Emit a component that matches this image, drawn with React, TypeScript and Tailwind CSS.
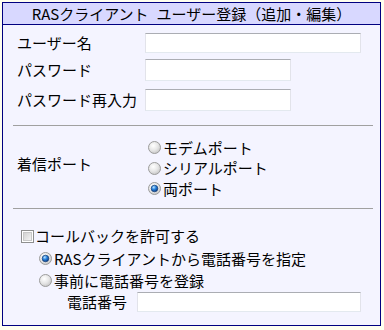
import React from "react";

const FONT = { fontFamily: '"Noto Sans CJK JP", "Noto Sans", sans-serif' };

const Radio = ({ checked }: { checked?: boolean }) => (
  <svg width="13" height="13" viewBox="0 0 13 13" className="shrink-0 block">
    <defs>
      <radialGradient id="rgOff" cx="40%" cy="35%" r="70%">
        <stop offset="0%" stopColor="#ffffff" />
        <stop offset="55%" stopColor="#e6e6e6" />
        <stop offset="100%" stopColor="#c4c4c4" />
      </radialGradient>
      <radialGradient id="rgOn" cx="38%" cy="32%" r="70%">
        <stop offset="0%" stopColor="#bfe6ff" />
        <stop offset="45%" stopColor="#2b86e0" />
        <stop offset="100%" stopColor="#0a3a85" />
      </radialGradient>
    </defs>
    <circle cx="6.5" cy="6.5" r="6" fill="url(#rgOff)" stroke="#9c9c9c" strokeWidth="1" />
    {checked && (
      <circle cx="6.5" cy="6.5" r="3.3" fill="url(#rgOn)" stroke="#163e74" strokeWidth="0.7" />
    )}
  </svg>
);

const Checkbox = () => (
  <svg width="13" height="13" viewBox="0 0 13 13" className="shrink-0 block">
    <defs>
      <linearGradient id="cbg" x1="0" y1="0" x2="1" y2="1">
        <stop offset="0%" stopColor="#d0d0d0" />
        <stop offset="100%" stopColor="#f6f6f6" />
      </linearGradient>
    </defs>
    <rect x="0.5" y="0.5" width="12" height="12" fill="#ffffff" stroke="#8e8f8f" />
    <rect x="2.5" y="2.5" width="8" height="8" fill="url(#cbg)" stroke="#c8c8c8" strokeWidth="1" />
  </svg>
);

const Input = ({ w, h }: { w: string; h: string }) => (
  <div
    className={`${w} ${h} bg-white border border-[#e2e3ea] border-t-[#abadb3] border-b-[#e3e9ef]`}
  />
);

export default function App() {
  return (
    <div className="min-h-screen bg-[#ffffee] pt-[2px] pl-[2px] text-black" style={FONT}>
      <div className="w-[379px] h-[324px] border border-[#000080] bg-[#f4f4ff] flex flex-col text-[15px] leading-[20px]">
        <div className="h-[22px] shrink-0 border-b border-[#000080] bg-[#d8d8ff] flex items-center justify-center">
          <span className="pr-[3px]">RASクライアント</span>
          <span className="ml-[5px]">ユーザー登録（追加・編集）</span>
        </div>

        {/* section 1 */}
        <div className="pt-[8px] pl-[14px] flex flex-col">
          <div className="h-[20px] flex items-center">
            <span className="w-[128px]">ユーザー名</span>
            <Input w="w-[216px]" h="h-[20px]" />
          </div>
          <div className="mt-[6px] h-[22px] flex items-center">
            <span className="w-[128px]">パスワード</span>
            <Input w="w-[146px]" h="h-[22px]" />
          </div>
          <div className="mt-[8px] h-[22px] flex items-center">
            <span className="w-[128px]">パスワード再入力</span>
            <Input w="w-[146px]" h="h-[22px]" />
          </div>
        </div>

        <div className="mt-[14px] ml-[10px] mr-[7px] border-t border-[#a0a0a0]" />

        {/* section 2 */}
        <div className="pt-[11px] pl-[14px] flex items-center">
          <span className="w-[128px] mb-[8px]">着信ポート</span>
          <div className="flex flex-col">
            <label className="h-[21px] flex items-center">
              <span className="ml-[3px]"><Radio /></span>
              <span className="ml-[2px]">モデムポート</span>
            </label>
            <label className="h-[20px] flex items-center">
              <span className="ml-[3px]"><Radio /></span>
              <span className="ml-[2px]">シリアルポート</span>
            </label>
            <label className="h-[21px] flex items-center">
              <span className="ml-[3px]"><Radio checked /></span>
              <span className="ml-[2px]">両ポート</span>
            </label>
          </div>
        </div>

        <div className="mt-[9px] ml-[10px] mr-[7px] border-t border-[#a0a0a0]" />

        {/* section 3 */}
        <div className="pt-[16px] flex flex-col">
          <label className="h-[22px] flex items-center pl-[18px]">
            <Checkbox />
            <span className="ml-[1px]">コールバックを許可する</span>
          </label>
          <label className="h-[23px] flex items-center pl-[36px]">
            <Radio checked />
            <span className="ml-[2px]">RASクライアントから電話番号を指定</span>
          </label>
          <label className="h-[21px] flex items-center pl-[36px]">
            <Radio />
            <span className="ml-[2px]">事前に電話番号を登録</span>
          </label>
          <div className="mt-[1px] h-[20px] flex items-center pl-[64px]">
            <span className="w-[70px]">電話番号</span>
            <Input w="w-[224px]" h="h-[20px]" />
          </div>
        </div>
      </div>
    </div>
  );
}
